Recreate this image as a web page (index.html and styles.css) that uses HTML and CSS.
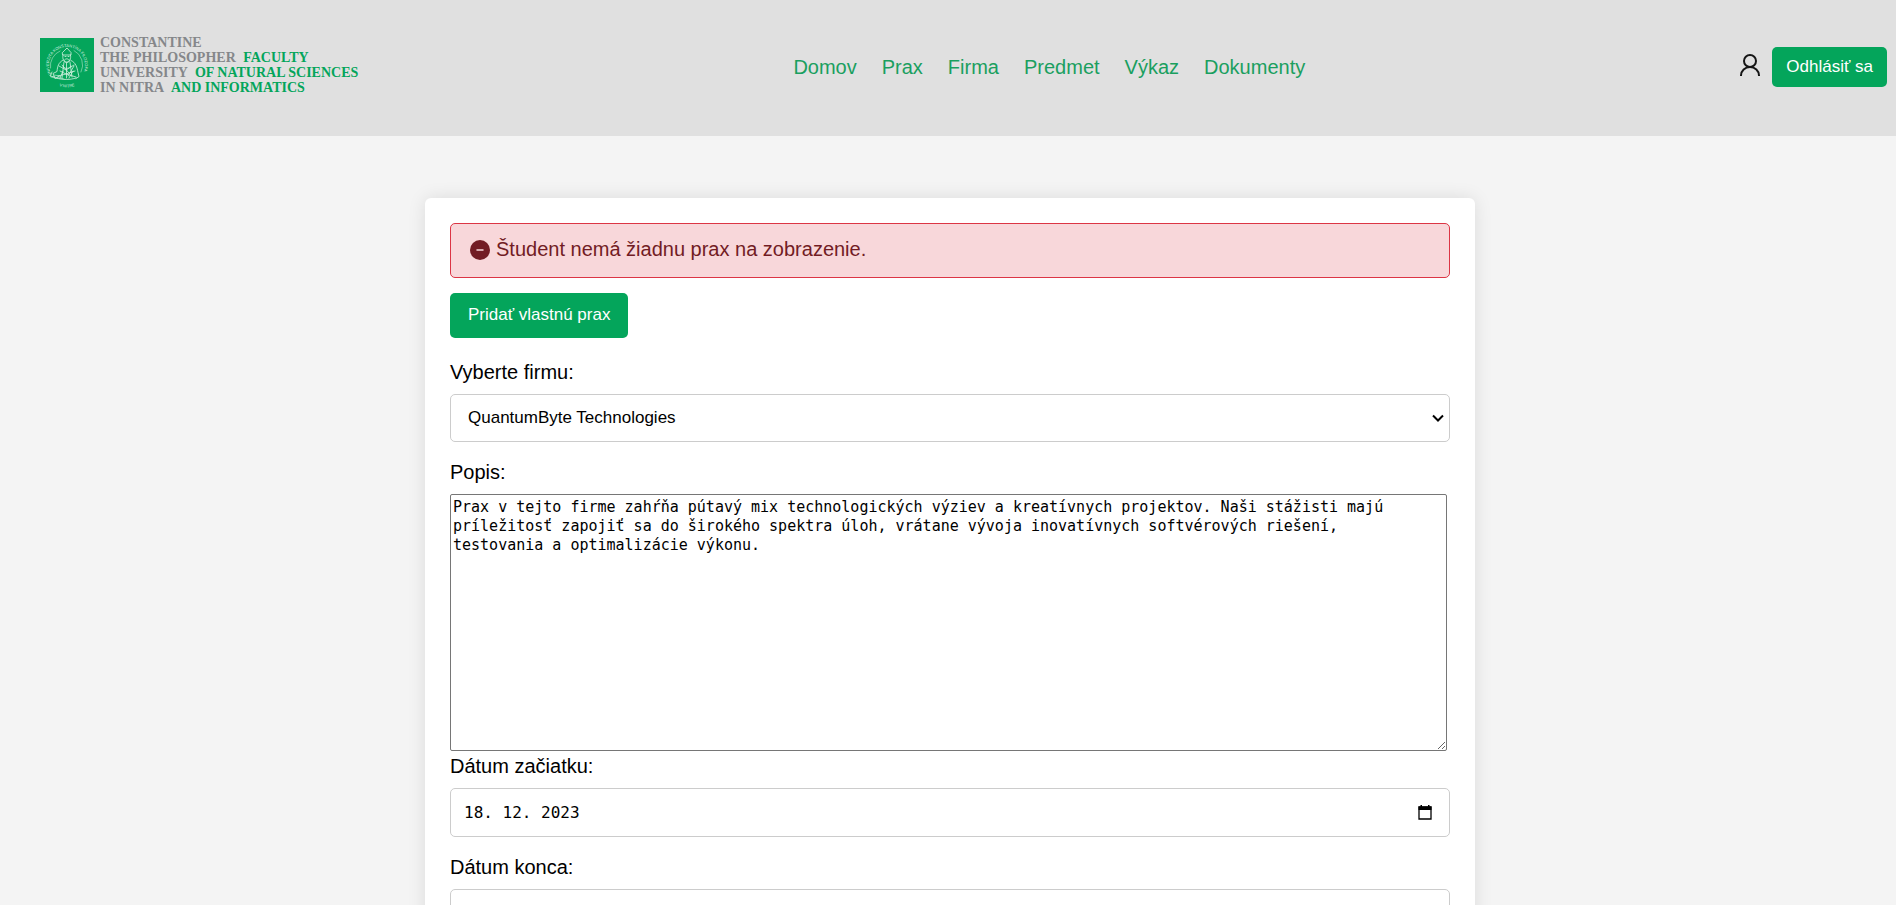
FILE: index.html
```html
<!DOCTYPE html>
<html lang="sk">
<head>
<meta charset="utf-8">
<meta name="viewport" content="width=device-width, initial-scale=1">
<title>Prax</title>
<link rel="stylesheet" href="styles.css">
</head>
<body>
<header class="header">
  <a class="logo" href="#">
    <svg class="logo-seal" viewBox="0 0 54 54" aria-hidden="true">
      <defs>
        <path id="ring-top" d="M12 37A18 18 0 1 1 37 42"/>
        <path id="ring-bottom" d="M11 42.500A22 22 0 0 0 43 42.500"/>
      </defs>
      <rect width="54" height="54" fill="#04a55b"/>
      <g class="seal-text">
        <text><textPath href="#ring-top">UNIVERZITA KONŠTANTÍNA FILOZOFA</textPath></text>
        <text text-anchor="middle"><textPath href="#ring-bottom" startOffset="50%">V NITRE</textPath></text>
      </g>
      <g fill="none" stroke="#d4f1e1" stroke-width=".8" stroke-linecap="round" stroke-linejoin="round">
        <path d="M10.500 30A16 16 0 0 1 20 13M34 12.500A16 16 0 0 1 41 34" stroke-width=".5"/>
        <path d="M22.500 14.500 27 10l4 4.500v2.500h-8zM23 17c-1 4 1 7 3.500 7s5-3 4-7M25 18.500h1m2 0h1M25 21.500c1-1 2.500-1 3.500 0M24 22c0 3 5 4 6 0"/>
        <path d="M22.500 22.500c-4 2-5 6-5.500 11l-4 2 2 5 4-2M31 22.500c5 2 6 7 7 12l1 4-3 2M24 24l-2 16M30 24l2 15M26.500 25v15"/>
        <path d="M19 28l7 4 8-5M20 33l6 3 9-3M18 38l8-2 10 3M16 40c7 2 14 2 20 0M12 34l-2 4 5 1M34 28l-6 10M22 27l7 8M20 40l3-7M29 40l4-7"/>
        <path d="M11 39c5 2 9 0 13 2M14 37l6 1M23 29c2 2 6 2 8-1" stroke-width=".6"/>
      </g>
    </svg>
    <span class="logo-text">
      <span>CONSTANTINE</span>
      <span>THE PHILOSOPHER <b>FACULTY</b></span>
      <span>UNIVERSITY <b>OF NATURAL SCIENCES</b></span>
      <span>IN NITRA <b>AND INFORMATICS</b></span>
    </span>
  </a>
  <nav class="nav">
    <a href="#">Domov</a>
    <a href="#">Prax</a>
    <a href="#">Firma</a>
    <a href="#">Predmet</a>
    <a href="#">Výkaz</a>
    <a href="#">Dokumenty</a>
  </nav>
  <div class="account">
    <a class="profile" href="#" aria-label="Profil">
      <svg viewBox="0 0 20 22" width="20" height="22" fill="none" stroke="#151515" stroke-width="2">
        <circle cx="10" cy="7" r="6"/>
        <path d="M1 22v-.500a9 8.500 0 0 1 18 0v.500"/>
      </svg>
    </a>
    <button class="btn btn-logout" type="button">Odhlásiť sa</button>
  </div>
</header>
<main class="main">
  <form class="card">
    <div class="alert" role="alert">
      <svg viewBox="0 0 20 20" width="20" height="20" aria-hidden="true">
        <circle cx="10" cy="10" r="10" fill="#721c24"/>
        <path d="M7 10h6" stroke="#f8d7da" stroke-width="1.500" stroke-linecap="round"/>
      </svg>
      <span>Študent nemá žiadnu prax na zobrazenie.</span>
    </div>
    <button class="btn btn-add" type="button">Pridať vlastnú prax</button>
    <div class="field">
      <label for="company">Vyberte firmu:</label>
      <div class="select">
        <select class="control" id="company"><option>QuantumByte Technologies</option></select>
        <svg class="chevron" viewBox="0 0 12 8" width="12" height="8" aria-hidden="true"><path d="M1 1.500l5 5 5-5" fill="none" stroke="#000" stroke-width="2"/></svg>
      </div>
    </div>
    <div class="field field-text">
      <label for="description">Popis:</label>
      <textarea class="description" id="description" spellcheck="false">Prax v tejto firme zahŕňa pútavý mix technologických výziev a kreatívnych projektov. Naši stážisti majú príležitosť zapojiť sa do širokého spektra úloh, vrátane vývoja inovatívnych softvérových riešení, testovania a optimalizácie výkonu.</textarea>
    </div>
    <div class="field">
      <label for="start">Dátum začiatku:</label>
      <div class="control date">
        <input id="start" type="text" value="18. 12. 2023">
        <button class="picker" type="button" aria-label="Vybrať dátum začiatku">
          <svg viewBox="0 0 14 15" width="14" height="15"><path d="M1 2h12v12H1z" fill="none" stroke="#000" stroke-width="1.300"/><path d="M.500 1.500h13V5H.500zM2.500 0H4v2H2.500zM10 0h1.500v2H10z"/></svg>
        </button>
      </div>
    </div>
    <div class="field">
      <label for="end">Dátum konca:</label>
      <div class="control date">
        <input id="end" type="text">
        <button class="picker" type="button" aria-label="Vybrať dátum konca">
          <svg viewBox="0 0 14 15" width="14" height="15"><path d="M1 2h12v12H1z" fill="none" stroke="#000" stroke-width="1.300"/><path d="M.500 1.500h13V5H.500zM2.500 0H4v2H2.500zM10 0h1.500v2H10z"/></svg>
        </button>
      </div>
    </div>
  </form>
</main>
</body>
</html>
```

FILE: styles.css
```css
* {
  box-sizing: border-box;
}

html {
  scrollbar-width: none;
}

body {
  margin: 0;
  background: #f4f4f4;
  color: #000;
  font-family: "Liberation Sans", Arial, sans-serif;
  font-size: 20px;
  line-height: 23px;
}

.header {
  display: flex;
  align-items: center;
  justify-content: space-between;
  min-height: 136px;
  padding: 0 9px 2px 40px;
  background: #e0e0e0;
}

.logo {
  display: flex;
  align-items: center;
  gap: 6px;
  padding-bottom: 4px;
  color: #85878a;
  text-decoration: none;
}

.logo-seal {
  width: 54px;
  height: 54px;
}

.seal-text {
  fill: #d4f1e1;
  font-family: "Liberation Sans", Arial, sans-serif;
  font-size: 4px;
}

.logo-text {
  display: flex;
  flex-direction: column;
  font-family: "Liberation Serif", "Times New Roman", serif;
  font-size: 14px;
  font-weight: bold;
  line-height: 15px;
  white-space: nowrap;
}

.logo-text b {
  margin-left: 4px;
  color: #04a55b;
}

.nav {
  display: flex;
  gap: 25px;
}

.nav a {
  color: #1a9f5f;
  text-decoration: none;
}

.account {
  display: flex;
  align-items: center;
  gap: 12px;
}

.profile {
  display: flex;
  padding-bottom: 4px;
}

.btn {
  border: 0;
  border-radius: 5px;
  background: #04a55b;
  color: #fff;
  font: 17px/20px "Liberation Sans", Arial, sans-serif;
  cursor: pointer;
}

.btn-logout {
  padding: 10px 14px;
}

.btn-add {
  align-self: flex-start;
  margin-bottom: 23px;
  padding: 12px 18px 13px;
}

.main {
  padding: 62px 0 50px 4px;
}

.card {
  display: flex;
  flex-direction: column;
  max-width: 1050px;
  margin: 0 auto;
  padding: 25px;
  border-radius: 6px;
  background: #fff;
  box-shadow: 0 0 18px rgba(0, 0, 0, 0.1);
}

.alert {
  display: flex;
  align-items: center;
  gap: 6px;
  margin-bottom: 15px;
  padding: 14px 19px 16px;
  border: 1px solid #dc3545;
  border-radius: 5px;
  background: #f8d7da;
  color: #721c24;
}

.field {
  display: flex;
  flex-direction: column;
  gap: 10px;
  margin-bottom: 19px;
}

.field-text {
  margin-bottom: 4px;
}

.control {
  width: 100%;
  height: 48px;
  border: 1px solid #ccc;
  border-radius: 5px;
  background: #fff;
  color: #000;
  font: 17px/20px "Liberation Sans", Arial, sans-serif;
}

.select {
  display: flex;
  position: relative;
}

.select .control {
  appearance: none;
  padding: 0 24px 0 17px;
}

.chevron {
  position: absolute;
  top: 20px;
  right: 6px;
  pointer-events: none;
}

.description {
  width: calc(100% - 3px);
  height: 257px;
  padding: 3px 20px 3px 2px;
  border: 1px solid #767676;
  border-radius: 2px;
  color: #000;
  font: 15px/19px "DejaVu Sans Mono", monospace;
  resize: both;
}

.date {
  display: flex;
  align-items: center;
  height: 49px;
  padding: 0 17px 0 13px;
}

.date input {
  flex: 1;
  min-width: 0;
  padding: 0;
  border: 0;
  outline: 0;
  background: none;
  font: 16px/19px "DejaVu Sans Mono", monospace;
}

.picker {
  display: flex;
  padding: 0;
  border: 0;
  background: none;
}
```
